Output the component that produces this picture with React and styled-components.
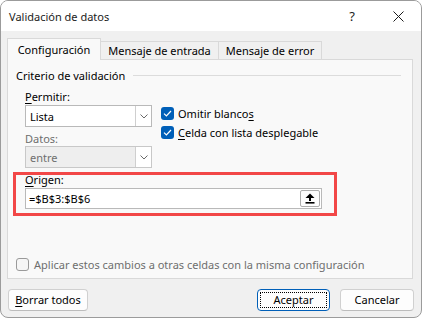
import React from "react";
import styled, { createGlobalStyle } from "styled-components";

const Global = createGlobalStyle`
  html, body { margin: 0; padding: 0; background: #ffffff; }
  body { font-family: "Noto Sans", "Open Sans", sans-serif; font-size: 11px; color: #000; }
  * { box-sizing: border-box; }
`;

const Window = styled.div`
  width: 422px;
  height: 318px;
  border: 1px solid #9b9b9b;
  border-radius: 8px;
  overflow: hidden;
  background: #f0f0f0;
  display: flex;
  flex-direction: column;
`;

const TitleBar = styled.div`
  height: 30px;
  background: #ffffff;
  display: flex;
  align-items: center;
  padding-left: 8px;
  flex: none;
`;

const Title = styled.div`
  flex: 1;
  font-size: 11px;
  color: #1b1b1b;
`;

const CaptionButton = styled.div`
  width: 46px;
  height: 30px;
  display: flex;
  align-items: center;
  justify-content: center;
  font-size: 13px;
  color: #1b1b1b;
`;

const Body = styled.div`
  padding: 7px 8px 0 6px;
`;

const TabRow = styled.div`
  display: flex;
  align-items: flex-end;
  position: relative;
  z-index: 1;
  margin-bottom: -1px;
`;

const Tab = styled.div`
  height: ${(p) => (p.$active ? "22px" : "18px")};
  margin-bottom: ${(p) => (p.$active ? "0" : "1px")};
  width: ${(p) => p.$w}px;
  border: 1px solid #d9d9d9;
  border-left: ${(p) => (p.$first ? "1px solid #d9d9d9" : "none")};
  border-bottom: none;
  background: ${(p) => (p.$active ? "#f9f9f9" : "#f0f0f0")};
  display: flex;
  align-items: center;
  justify-content: center;
  padding-bottom: ${(p) => (p.$active ? "1px" : "0")};
  white-space: nowrap;
`;

const Panel = styled.div`
  height: 220px;
  border: 1px solid #d9d9d9;
  background: #f9f9f9;
  padding: 7px 6px 0 8px;
  display: flex;
  flex-direction: column;
`;

const GroupHeader = styled.div`
  display: flex;
  align-items: center;
  height: 16px;
  gap: 8px;
  &::after {
    content: "";
    flex: 1;
    height: 1px;
    background: #dcdcdc;
    margin-right: 5px;
  }
`;

const GroupBody = styled.div`
  display: flex;
  flex-direction: column;
`;

const TopRow = styled.div`
  display: flex;
  padding-left: 9px;
  gap: 9px;
  margin-top: 5px;
`;

const Column = styled.div`
  display: flex;
  flex-direction: column;
  width: ${(p) => p.$w || "auto"};
  padding-top: ${(p) => p.$pt || "0"};
`;

const Label = styled.div`
  height: ${(p) => p.$h || "17px"};
  line-height: ${(p) => p.$lh || p.$h || "17px"};
  color: ${(p) => (p.$disabled ? "#6e6e6e" : "#000")};
  margin-top: ${(p) => p.$mt || "0"};
`;

const U = styled.span`
  text-decoration: underline;
  text-underline-offset: 2px;
`;

const Select = styled.div`
  height: 22px;
  width: 127px;
  border: 1px solid ${(p) => (p.$disabled ? "#c8c8c8" : "#b9b9b9")};
  background: ${(p) => (p.$disabled ? "#eeeeee" : "#ffffff")};
  display: flex;
  color: ${(p) => (p.$disabled ? "#6e6e6e" : "#000")};
`;

const SelectValue = styled.div`
  flex: 1;
  padding-left: 4px;
  display: flex;
  align-items: center;
`;

const SelectButton = styled.div`
  width: 16px;
  border-left: 1px solid #cfcfcf;
  background: #ffffff;
  display: flex;
  align-items: center;
  justify-content: center;
`;

const CheckRow = styled.div`
  display: flex;
  align-items: center;
  height: 19px;
  gap: 4px;
  color: ${(p) => (p.$disabled ? "#6e6e6e" : "#000")};
`;

const Box = styled.div`
  width: 13px;
  height: 13px;
  border-radius: 3px;
  background: ${(p) => (p.$checked ? "#005fb8" : "#f6f6f6")};
  border: ${(p) => (p.$checked ? "none" : "1px solid #9a9a9a")};
  display: flex;
  align-items: center;
  justify-content: center;
  flex: none;
`;

const Highlight = styled.div`
  margin-top: 4px;
  margin-left: -3px;
  width: 324px;
  border: 3px solid #f24747;
  padding: 0 0 4px 9px;
`;

const InputRow = styled.div`
  width: 297px;
  height: 21px;
  border: 1px solid #b9b9b9;
  background: #ffffff;
  display: flex;
  align-items: center;
  padding: 0 1px 0 3px;
`;

const InputText = styled.div`
  flex: 1;
`;

const RefButton = styled.div`
  width: 20px;
  height: 17px;
  border: 1px solid #adadad;
  border-radius: 2px;
  background: #fdfdfd;
  display: flex;
  align-items: center;
  justify-content: center;
`;

const ApplyRow = styled(CheckRow)`
  margin-top: 39px;
  gap: 5px;
`;

const Footer = styled.div`
  display: flex;
  padding: 10px 7px 0 7px;
  gap: 10px;
`;

const Button = styled.div`
  height: 22px;
  width: ${(p) => p.$w}px;
  border: 1px solid ${(p) => (p.$primary ? "#005fb8" : "#d0d0d0")};
  border-bottom-color: ${(p) => (p.$primary ? "#005fb8" : "#bcbcbc")};
  border-radius: 4px;
  background: #fdfdfd;
  display: flex;
  align-items: center;
  justify-content: center;
  padding-bottom: 1px;
  position: relative;
  margin-left: ${(p) => p.$ml || "0"};
  ${(p) =>
    p.$primary &&
    `&::after {
      content: "";
      position: absolute;
      inset: 2px;
      border: 1px dotted #000;
    }`}
`;

const Chevron = () => (
  <svg width="8" height="5" viewBox="0 0 8 5">
    <polyline points="0.5,0.5 4,4 7.5,0.5" fill="none" stroke="#6a6a6a" strokeWidth="1" />
  </svg>
);

const Check = () => (
  <svg width="9" height="7" viewBox="0 0 9 7">
    <polyline points="1,3.6 3.4,6 8,1" fill="none" stroke="#fff" strokeWidth="1.2" />
  </svg>
);

const UploadIcon = () => (
  <svg width="10" height="11" viewBox="0 0 10 11">
    <polygon points="5,0.5 9.5,5 0.5,5" fill="#000" />
    <rect x="4" y="4" width="2" height="4" fill="#000" />
    <rect x="0.5" y="9" width="9" height="1.6" fill="#000" />
  </svg>
);

const CloseIcon = () => (
  <svg width="11" height="11" viewBox="0 0 11 11">
    <path d="M0.5 0.5 L10.5 10.5 M10.5 0.5 L0.5 10.5" stroke="#1b1b1b" strokeWidth="1" />
  </svg>
);

export default function App() {
  return (
    <>
      <Global />
      <Window>
        <TitleBar>
          <Title>Validación de datos</Title>
          <CaptionButton>?</CaptionButton>
          <CaptionButton>
            <CloseIcon />
          </CaptionButton>
        </TitleBar>
        <Body>
          <TabRow>
            <Tab $active $first $w={94}>Configuración</Tab>
            <Tab $w={118}>Mensaje de entrada</Tab>
            <Tab $w={103}>Mensaje de error</Tab>
          </TabRow>
          <Panel>
            <GroupHeader>Criterio de validación</GroupHeader>
            <GroupBody>
              <TopRow>
                <Column $w="127px">
                  <Label>
                    <U>P</U>ermitir:
                  </Label>
                  <Select>
                    <SelectValue>Lista</SelectValue>
                    <SelectButton>
                      <Chevron />
                    </SelectButton>
                  </Select>
                  <Label $disabled $mt="4px" $h="15px">
                    Datos:
                  </Label>
                  <Select $disabled>
                    <SelectValue>entre</SelectValue>
                    <SelectButton>
                      <Chevron />
                    </SelectButton>
                  </Select>
                </Column>
                <Column $pt="16px">
                  <CheckRow>
                    <Box $checked>
                      <Check />
                    </Box>
                    <span>
                      Omitir blanco<U>s</U>
                    </span>
                  </CheckRow>
                  <CheckRow>
                    <Box $checked>
                      <Check />
                    </Box>
                    <span>
                      <U>C</U>elda con lista desplegable
                    </span>
                  </CheckRow>
                </Column>
              </TopRow>
              <Highlight>
                <Label $h="13px" $lh="10px">
                  <U>O</U>rigen:
                </Label>
                <InputRow>
                  <InputText>=$B$3:$B$6</InputText>
                  <RefButton>
                    <UploadIcon />
                  </RefButton>
                </InputRow>
              </Highlight>
              <ApplyRow $disabled>
                <Box />
                <span>Aplicar estos cambios a otras celdas con la misma configuración</span>
              </ApplyRow>
            </GroupBody>
          </Panel>
        </Body>
        <Footer>
          <Button $w={80}>
            <span>
              <U>B</U>orrar todos
            </span>
          </Button>
          <Button $w={73} $primary $ml="auto">
            Aceptar
          </Button>
          <Button $w={74}>Cancelar</Button>
        </Footer>
      </Window>
    </>
  );
}
